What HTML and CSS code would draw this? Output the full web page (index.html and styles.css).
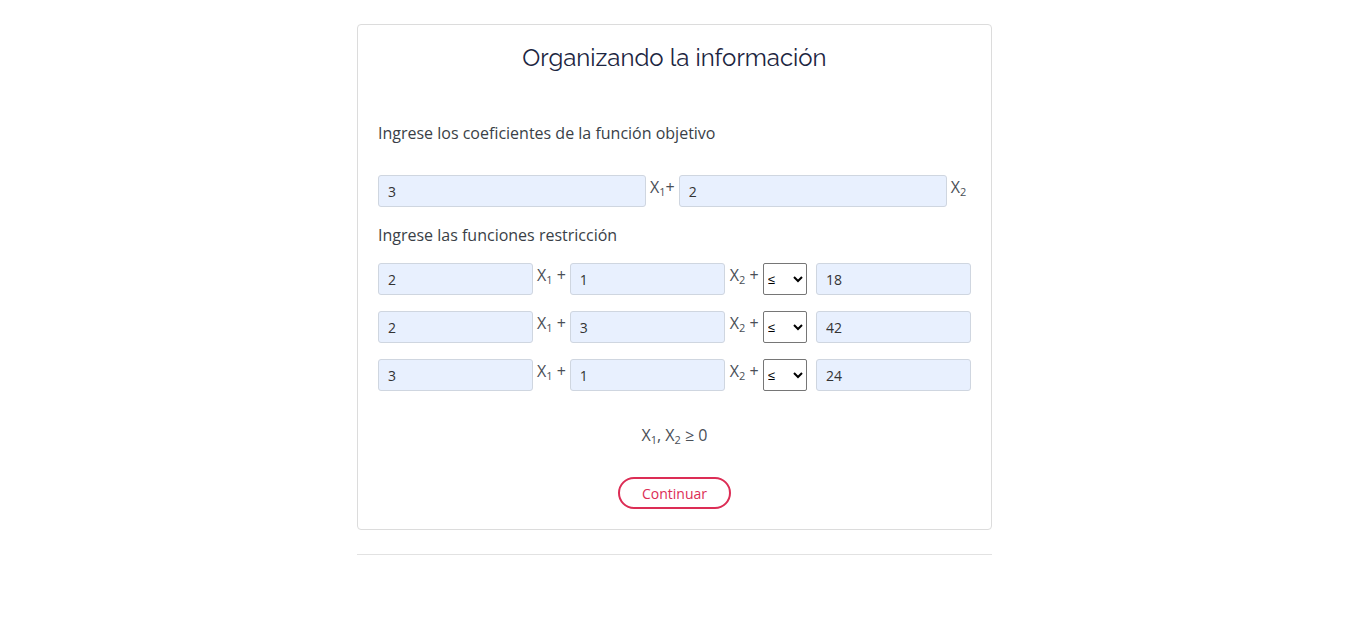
FILE: index.html
```html
<!DOCTYPE html>
<html lang="es">
<head>
<meta charset="utf-8">
<title>Organizando la información</title>
<link rel="stylesheet" href="styles.css">
</head>
<body>
<main class="page">
  <section class="card">
    <h1 class="title">Organizando la información</h1>
    <p class="label label-first">Ingrese los coeficientes de la función objetivo</p>
    <div class="row row-objective">
      <input class="field field-wide" type="text" value="3">
      <span class="var var-tight">X<sub>1</sub>+</span>
      <input class="field field-wide" type="text" value="2">
      <span class="var">X<sub>2</sub></span>
    </div>
    <p class="label label-second">Ingrese las funciones restricción</p>
    <div class="row row-constraint">
      <input class="field field-narrow" type="text" value="2">
      <span class="var">X<sub>1</sub> +</span>
      <input class="field field-narrow" type="text" value="1">
      <span class="var var-second">X<sub>2</sub> +</span>
      <select class="op"><option>≤</option><option>≥</option><option>=</option></select>
      <input class="field field-narrow field-rhs" type="text" value="18">
    </div>
    <div class="row row-constraint">
      <input class="field field-narrow" type="text" value="2">
      <span class="var">X<sub>1</sub> +</span>
      <input class="field field-narrow" type="text" value="3">
      <span class="var var-second">X<sub>2</sub> +</span>
      <select class="op"><option>≤</option><option>≥</option><option>=</option></select>
      <input class="field field-narrow field-rhs" type="text" value="42">
    </div>
    <div class="row row-constraint">
      <input class="field field-narrow" type="text" value="3">
      <span class="var">X<sub>1</sub> +</span>
      <input class="field field-narrow" type="text" value="1">
      <span class="var var-second">X<sub>2</sub> +</span>
      <select class="op"><option>≤</option><option>≥</option><option>=</option></select>
      <input class="field field-narrow field-rhs" type="text" value="24">
    </div>
    <p class="nonneg">X<sub>1</sub>, X<sub>2</sub> ≥ 0</p>
    <div class="actions">
      <button class="btn" type="button">Continuar</button>
    </div>
  </section>
  <hr class="divider">
</main>
</body>
</html>
```

FILE: styles.css
```css
html, body {
  margin: 0;
  padding: 0;
  background: #ffffff;
}

body {
  font-family: "Open Sans", "Liberation Sans", sans-serif;
  color: #3a3f47;
  font-size: 16px;
}

.page {
  width: 635px;
  margin: 24px 0 0 calc(50% - 316px);
}

.card {
  box-sizing: border-box;
  width: 635px;
  border: 1px solid #dcdcdc;
  border-radius: 4px;
  padding: 0 20px 20px;
}

.title {
  margin: 17px 0 0;
  font-family: "Raleway", "Lato", "Open Sans", sans-serif;
  font-weight: 400;
  font-size: 24px;
  line-height: 32px;
  color: #1c2541;
  text-align: center;
}

.label {
  margin: 0;
  font-size: 16px;
  line-height: 24px;
  color: #3a3f47;
}

.label-first {
  margin-top: 47px;
}

.label-second {
  margin-top: 16px;
}

.row {
  display: flex;
  align-items: flex-start;
}

.row-objective {
  margin-top: 30px;
}

.row-constraint {
  margin-top: 16px;
}

.field {
  box-sizing: border-box;
  height: 32px;
  background: #e8f0fe;
  border: 1px solid #cfd6e0;
  border-radius: 3px;
  padding: 0 9px;
  font-family: "Open Sans", "Liberation Sans", sans-serif;
  font-size: 14px;
  color: #333;
  outline: none;
}

.field-wide {
  width: 268px;
}

.field-narrow {
  width: 155px;
}

.field-rhs {
  margin-left: 9px;
}

.var {
  font-size: 16px;
  line-height: 20px;
  color: #4a4f57;
  padding: 0 4px;
  white-space: nowrap;
  margin-top: 2px;
}

.var-second {
  padding-left: 5px;
}

.var sub, .nonneg sub {
  font-size: 11px;
  vertical-align: -3px;
  line-height: 0;
}

.op {
  box-sizing: border-box;
  width: 45px;
  height: 32px;
  font-size: 13px;
  border: 1px solid #767676;
  border-radius: 2px;
  background: #fff;
  color: #000;
}

.nonneg {
  margin: 32px 0 0;
  text-align: center;
  font-size: 16px;
  line-height: 24px;
  color: #4a4f57;
}

.actions {
  display: flex;
  justify-content: center;
  margin-top: 30px;
}

.btn {
  box-sizing: border-box;
  width: 113px;
  height: 32px;
  border: 2px solid #dc2d55;
  border-radius: 16px;
  background: #fff;
  color: #dc2d55;
  font-family: "Open Sans", "Liberation Sans", sans-serif;
  font-size: 14px;
  cursor: pointer;
}

.divider {
  margin: 24px 0 0;
  border: 0;
  border-top: 1px solid #e2e2e2;
  height: 0;
}
```
